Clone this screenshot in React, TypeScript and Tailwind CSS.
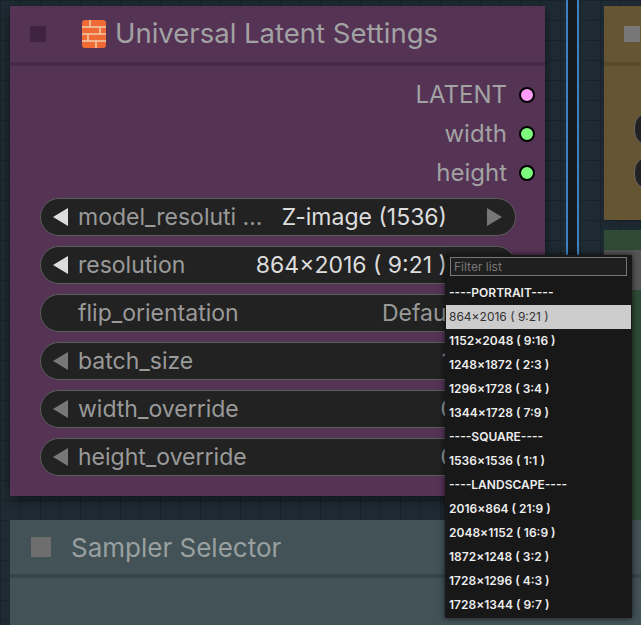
import React from "react";

const Tri = ({ dir, c }: { dir: "l" | "r"; c: string }) => (
  <svg width="18" height="20" viewBox="0 0 18 20" className="shrink-0">
    {dir === "l" ? <polygon points="16,1 16,19 1,10" fill={c} /> : <polygon points="2,1 2,19 17,10" fill={c} />}
  </svg>
);

function Widget({ name, value, left, right, valCls }: { name: string; value: string; left?: string; right?: string; valCls?: string }) {
  return (
    <div className="h-[38px] rounded-full bg-[#222222] border border-[#5c5c5c] flex items-center pl-[11px] pr-[12px] text-[23px] leading-none whitespace-nowrap">
      {left ? <Tri dir="l" c={left} /> : <div className="w-[18px]" />}
      <span className="ml-[8px] text-[#9a9a9a]">{name}</span>
      <span className={`ml-auto ${valCls ?? "text-[#dddddd]"}`}>{value}</span>
      {right && <span className="ml-[38px]"><Tri dir="r" c={right} /></span>}
    </div>
  );
}

const items = [
  ["----PORTRAIT----", false],
  ["864×2016 ( 9:21 )", true],
  ["1152×2048 ( 9:16 )", false],
  ["1248×1872 ( 2:3 )", false],
  ["1296×1728 ( 3:4 )", false],
  ["1344×1728 ( 7:9 )", false],
  ["----SQUARE----", false],
  ["1536×1536 ( 1:1 )", false],
  ["----LANDSCAPE----", false],
  ["2016×864 ( 21:9 )", false],
  ["2048×1152 ( 16:9 )", false],
  ["1872×1248 ( 3:2 )", false],
  ["1728×1296 ( 4:3 )", false],
  ["1728×1344 ( 9:7 )", false],
] as const;

export default function App() {
  return (
    <div
      className="relative w-[641px] h-[625px] overflow-hidden bg-[#1f2b33]"
      style={{
        fontFamily: "Inter, 'Noto Sans', sans-serif",
        backgroundImage:
          "linear-gradient(#18232a 1px, transparent 1px), linear-gradient(90deg, #18232a 1px, transparent 1px)",
        backgroundSize: "20px 20px",
      }}
    >
      <div className="absolute left-[566px] top-0 w-[13px] h-[625px] bg-[#151a1c] border-x-2 border-[#3b82c4]" />
      <div className="absolute left-[604px] top-[6px] w-[60px] h-[214px] bg-[#665533] shadow-lg">
        <div className="h-[60px] border-b-4 border-[#594a2c] flex items-center pl-[20px]">
          <div className="w-[16px] h-[16px] bg-[#777]" />
        </div>
        <div className="absolute left-[30px] top-[106px] w-[30px] h-[34px] rounded-full bg-[#222] border border-[#666]" />
        <div className="absolute left-[30px] top-[150px] w-[30px] h-[34px] rounded-full bg-[#222] border border-[#666]" />
      </div>
      <div className="absolute left-[604px] top-[230px] w-[40px] h-[395px] bg-[#2f4a35]">
        <div className="mt-[20px] h-[40px] bg-[#555]" />
        <div className="mt-[300px] h-[30px] bg-[#555]" />
      </div>

      <div className="absolute left-[10px] top-[6px] w-[535px] h-[490px] bg-[#553355] shadow-[0_4px_12px_rgba(0,0,0,0.5)]">
        <div className="h-[60px] border-b-4 border-[#472a47] flex items-center pl-[20px]">
          <div className="w-[16px] h-[16px] bg-[#3f2340]" />
          <svg width="24" height="28" viewBox="0 0 24 28" className="ml-[36px]">
            <rect x="0" y="0" width="24" height="28" rx="3" fill="#f06a35" />
            <g stroke="#f3c7a8" strokeWidth="1.6">
              <line x1="0" y1="7" x2="24" y2="7" />
              <line x1="0" y1="14" x2="24" y2="14" />
              <line x1="0" y1="21" x2="24" y2="21" />
              <line x1="8" y1="0" x2="8" y2="7" />
              <line x1="18" y1="7" x2="18" y2="14" />
              <line x1="6" y1="14" x2="6" y2="21" />
              <line x1="14" y1="21" x2="14" y2="28" />
            </g>
          </svg>
          <span className="ml-[9px] text-[27.5px] text-[#a2a2a2]">Universal Latent Settings</span>
        </div>
        <div className="flex flex-col items-end pr-[10px] pt-[16px] gap-[13px] text-[24px] text-[#a2a2a2] leading-none">
          {[["LATENT", "#ff9cf9"], ["width", "#7dfa7d"], ["height", "#7dfa7d"]].map(([t, c]) => (
            <div key={t} className="flex items-center h-[26px]">
              <span>{t}</span>
              <span className="ml-[12px] w-[16px] h-[16px] rounded-full border-2 border-black" style={{ background: c }} />
            </div>
          ))}
        </div>
        <div className="mt-[12px] ml-[30px] w-[476px] flex flex-col gap-[10px]">
          <Widget name="model_resoluti …" value="Z-image (1536)" left="#dddddd" right="#777777" />
          <Widget name="resolution" value="864×2016 ( 9:21 )" left="#dddddd" right="#777777" />
          <Widget name="flip_orientation" value="Default" valCls="text-[#999] mr-[43px]" />
          <Widget name="batch_size" value="1" left="#777777" valCls="text-[#999] mr-[52px]" />
          <Widget name="width_override" value="0" left="#777777" valCls="text-[#999] mr-[48px]" />
          <Widget name="height_override" value="0" left="#777777" valCls="text-[#999] mr-[48px]" />
        </div>
      </div>

      <div className="absolute left-[10px] top-[520px] w-[640px] h-[120px] bg-[#425257]">
        <div className="h-[58px] border-b-4 border-[#374549] flex items-center pl-[21px]">
          <div className="w-[20px] h-[20px] bg-[#6e6e6e]" />
          <span className="ml-[20px] text-[26px] text-[#9aa0a0]">Sampler Selector</span>
        </div>
      </div>

      <div className="absolute left-[445px] top-[255px] w-[187px] h-[363px] bg-[#181818] shadow-[0_0_6px_rgba(0,0,0,0.7)] px-[1px] pt-[2px]">
        <div className="mx-[4px] h-[19px] border border-[#777] bg-[#1f1f1f] text-[12px] text-[#777] pl-[3px] leading-[17px]">Filter list</div>
        <div className="mt-[5px] flex flex-col">
          {items.map(([t, sel]) => (
            <div
              key={t}
              className={`h-[24px] flex items-center pl-[3px] text-[12px] ${sel ? "bg-[#cccccc] text-[#333] font-normal" : "text-[#eeeeee] font-semibold"}`}
            >
              {t}
            </div>
          ))}
        </div>
      </div>
    </div>
  );
}
